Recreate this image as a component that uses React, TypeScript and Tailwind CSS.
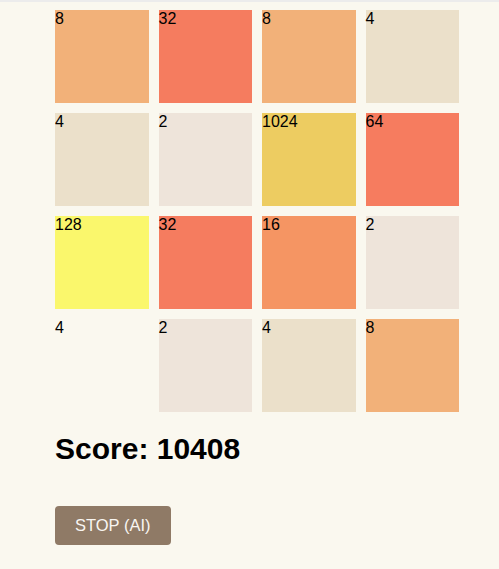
const board: (number | null)[][] = [
  [8, 32, 8, 4],
  [4, 2, 1024, 64],
  [128, 32, 16, 2],
  [4, 2, 4, 8],
];

// the first tile of the last row is drawn without a background in the capture
const bare = new Set(['3-0']);

const tileColors: Record<number, string> = {
  2: 'bg-[#eee4da]',
  4: 'bg-[#ebe0ca]',
  8: 'bg-[#f2b179]',
  16: 'bg-[#f59563]',
  32: 'bg-[#f57c5f]',
  64: 'bg-[#f67c5f]',
  128: 'bg-[#faf76c]',
  1024: 'bg-[#edcc61]',
};

export default function App() {
  return (
    <div className="min-h-[569px] w-full bg-[#faf8ef] border-t-2 border-[#ececec] font-['Liberation_Sans',Arial,sans-serif] text-black">
      <div className="pl-[55px] pt-2">
        {/* Board */}
        <div className="grid w-[404px] grid-cols-4 gap-[10px]">
          {board.map((row, r) =>
            row.map((value, c) => (
              <div
                key={`${r}-${c}`}
                className={`h-[93px] text-[16px] leading-[normal] ${
                  bare.has(`${r}-${c}`) ? '' : value ? tileColors[value] : 'bg-[#cdc1b4]'
                }`}
              >
                {value}
              </div>
            ))
          )}
        </div>

        {/* Score */}
        <h2 className="mt-[20px] text-[30px] font-bold leading-[normal]">Score: 10408</h2>

        {/* Controls */}
        <button className="mt-[40px] rounded-[4px] bg-[#8f7a66] px-5 py-2.5 text-[16.5px] leading-[normal] text-[#f9f6f2]">
          STOP (AI)
        </button>
      </div>
    </div>
  );
}
